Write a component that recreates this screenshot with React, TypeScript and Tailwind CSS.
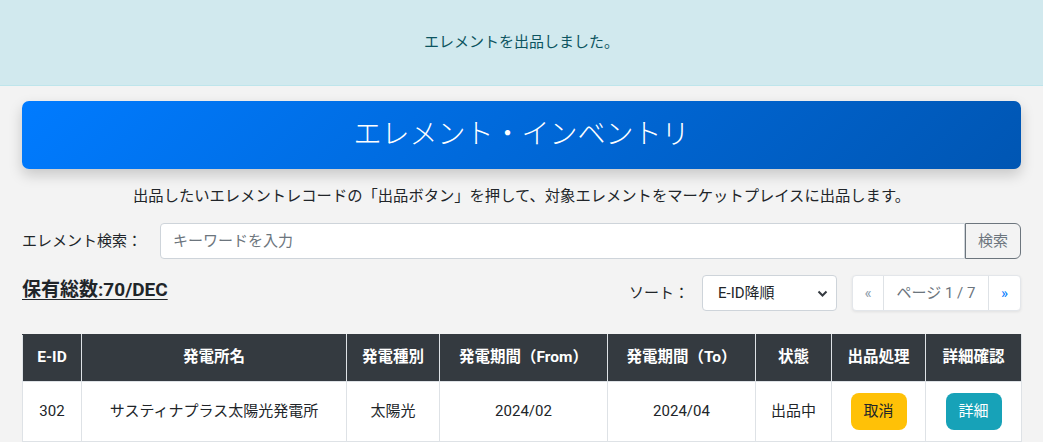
import React from "react";

const FONT = { fontFamily: 'Roboto, "Noto Sans CJK JP", sans-serif' };

const columns = [
  { label: "E-ID", w: "w-[59px]" },
  { label: "発電所名", w: "w-[265px]" },
  { label: "発電種別", w: "w-[93px]" },
  { label: "発電期間（From）", w: "w-[168px]" },
  { label: "発電期間（To）", w: "w-[148px]" },
  { label: "状態", w: "w-[76px]" },
  { label: "出品処理", w: "w-[94px]" },
  { label: "詳細確認", w: "w-[96px]" },
];

export default function App() {
  return (
    <div className="min-h-[442px] bg-[#f3f3f3] text-[#212529]" style={FONT}>
      {/* alert */}
      <div className="flex h-[86px] items-center justify-center border-b border-[#bee5eb] bg-[#d1e9ee] text-[15px] text-[#0c5460]">
        エレメントを出品しました。
      </div>

      <div className="px-[22px]">
        {/* title */}
        <div className="mt-[15px] flex h-[68px] items-center justify-center rounded-[7px] bg-[linear-gradient(135deg,#007bff,#0056b3)] text-[28px] font-light text-white shadow-[0_6px_14px_rgba(0,0,0,0.18)]">
          エレメント・インベントリ
        </div>

        <p className="mt-[17px] text-center text-[15.3px] leading-[20px]">
          出品したいエレメントレコードの「出品ボタン」を押して、対象エレメントをマーケットプレイスに出品します。
        </p>

        {/* search */}
        <div className="mt-[17px] flex h-[36px] items-center">
          <span className="w-[138px] text-[15px]">エレメント検索：</span>
          <input
            className="h-full flex-1 rounded-l-[4px] border border-[#ced4da] bg-white px-3 text-[15px] outline-none placeholder:text-[#6c757d]"
            placeholder="キーワードを入力"
          />
          <button className="h-full w-[56px] rounded-r-[6px] border border-[#6c757d] text-[15px] text-[#6c757d]">
            検索
          </button>
        </div>

        {/* count / sort / pager */}
        <div className="mt-[16px] flex h-[36px] items-center">
          <span className="-mt-[5px] text-[19px] font-bold underline underline-offset-[3px]">保有総数:70/DEC</span>
          <div className="ml-auto flex items-center">
            <span className="mr-[13px] text-[15px]">ソート：</span>
            <div className="relative flex h-[36px] w-[135px] items-center rounded-[4px] border border-[#ced4da] bg-white pl-[15px] text-[15px]">
              E-ID降順
              <svg className="absolute right-[8px] top-[14px]" width="11" height="8" viewBox="0 0 11 8">
                <path d="M1.5 1.5 L5.5 5.5 L9.5 1.5" fill="none" stroke="#343a40" strokeWidth="2" />
              </svg>
            </div>
            <div className="ml-[15px] flex h-[36px] overflow-hidden rounded-[4px] border border-[#e3e6ea] bg-white text-[15px] shadow-[0_1px_3px_rgba(0,0,0,0.08)]">
              <span className="flex w-[31px] items-center justify-center border-r border-[#dee2e6] text-[#8a9aa8]">«</span>
              <span className="flex w-[105px] items-center justify-center border-r border-[#dee2e6] text-[#6c757d]">ページ 1 / 7</span>
              <span className="flex w-[31px] items-center justify-center text-[#007bff]">»</span>
            </div>
          </div>
        </div>

        {/* table */}
        <table className="mt-[23px] w-full table-fixed border-collapse text-[15px]">
          <thead>
            <tr className="h-[47px] bg-[#343a40] text-white">
              {columns.map((c) => (
                <th key={c.label} className={`${c.w} border border-[#dee2e6] border-t-[#343a40] text-[15.5px] font-bold`}>
                  {c.label}
                </th>
              ))}
            </tr>
          </thead>
          <tbody>
            <tr className="h-[60px] bg-white text-center">
              <td className="border border-[#dee2e6]">302</td>
              <td className="border border-[#dee2e6]">サスティナプラス太陽光発電所</td>
              <td className="border border-[#dee2e6]">太陽光</td>
              <td className="border border-[#dee2e6]">2024/02</td>
              <td className="border border-[#dee2e6]">2024/04</td>
              <td className="border border-[#dee2e6]">出品中</td>
              <td className="border border-[#dee2e6]">
                <button className="h-[37px] w-[56px] rounded-[8px] bg-[#ffc107] text-[#212529]">取消</button>
              </td>
              <td className="border border-[#dee2e6]">
                <button className="h-[37px] w-[56px] rounded-[8px] bg-[#17a2b8] text-white">詳細</button>
              </td>
            </tr>
          </tbody>
        </table>
      </div>
    </div>
  );
}
